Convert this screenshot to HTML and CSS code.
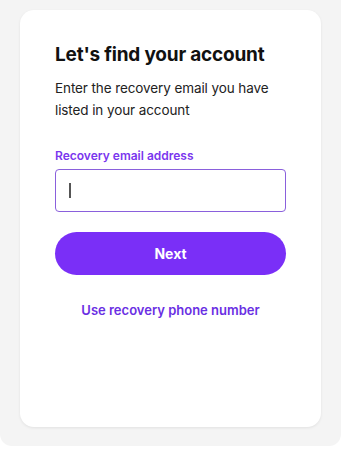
FILE: index.html
```html
<!DOCTYPE html>
<html>
<head>
<meta charset="utf-8">
<link rel="stylesheet" href="styles.css">
</head>
<body>
<div class="frame">
  <div class="card">
    <h1 class="title">Let's find your account</h1>
    <p class="desc">Enter the recovery email you have listed in your account</p>
    <label class="label">Recovery email address</label>
    <div class="input"><span class="caret"></span></div>
    <button class="btn">Next</button>
    <a class="link">Use recovery phone number</a>
  </div>
</div>
</body>
</html>
```
FILE: styles.css
```css
html, body {
  margin: 0;
  padding: 0;
  background: #ffffff;
}
body {
  width: 341px;
  height: 450px;
  overflow: hidden;
  font-family: Inter, "Noto Sans", sans-serif;
}
.frame {
  box-sizing: border-box;
  width: 341px;
  height: 446px;
  background: #f4f4f4;
  border-radius: 0 0 12px 12px;
  padding: 10px 20px 19px 20px;
}
.card {
  box-sizing: border-box;
  height: 417px;
  background: #ffffff;
  border-radius: 14px;
  box-shadow: 0 1px 3px rgba(0,0,0,0.08);
  padding: 33px 35px 0 35px;
  display: flex;
  flex-direction: column;
}
.title {
  margin: 0;
  font-size: 19px;
  line-height: 24px;
  font-weight: 700;
  color: #111111;
  letter-spacing: -0.2px;
}
.desc {
  margin: 10px 0 0 0;
  font-size: 13.5px;
  line-height: 22px;
  color: #222222;
  width: 231px;
  letter-spacing: -0.1px;
}
.label {
  margin-top: 27px;
  font-size: 12px;
  line-height: 16px;
  font-weight: 600;
  color: #7a36ee;
}
.input {
  margin-top: 5px;
  box-sizing: border-box;
  height: 43px;
  border: 1px solid #8a60dc;
  border-radius: 4px;
  display: flex;
  align-items: center;
  padding-left: 13px;
}
.caret {
  width: 1.5px;
  height: 15px;
  background: #555555;
}
.btn {
  margin-top: 20px;
  height: 43px;
  border: none;
  border-radius: 22px;
  background: #7a2ff7;
  color: #ffffff;
  font-family: Inter, "Noto Sans", sans-serif;
  font-size: 14px;
  font-weight: 700;
}
.link {
  margin-top: 26px;
  text-align: center;
  font-size: 13px;
  line-height: 18px;
  font-weight: 600;
  color: #6a2fe3;
}
```
